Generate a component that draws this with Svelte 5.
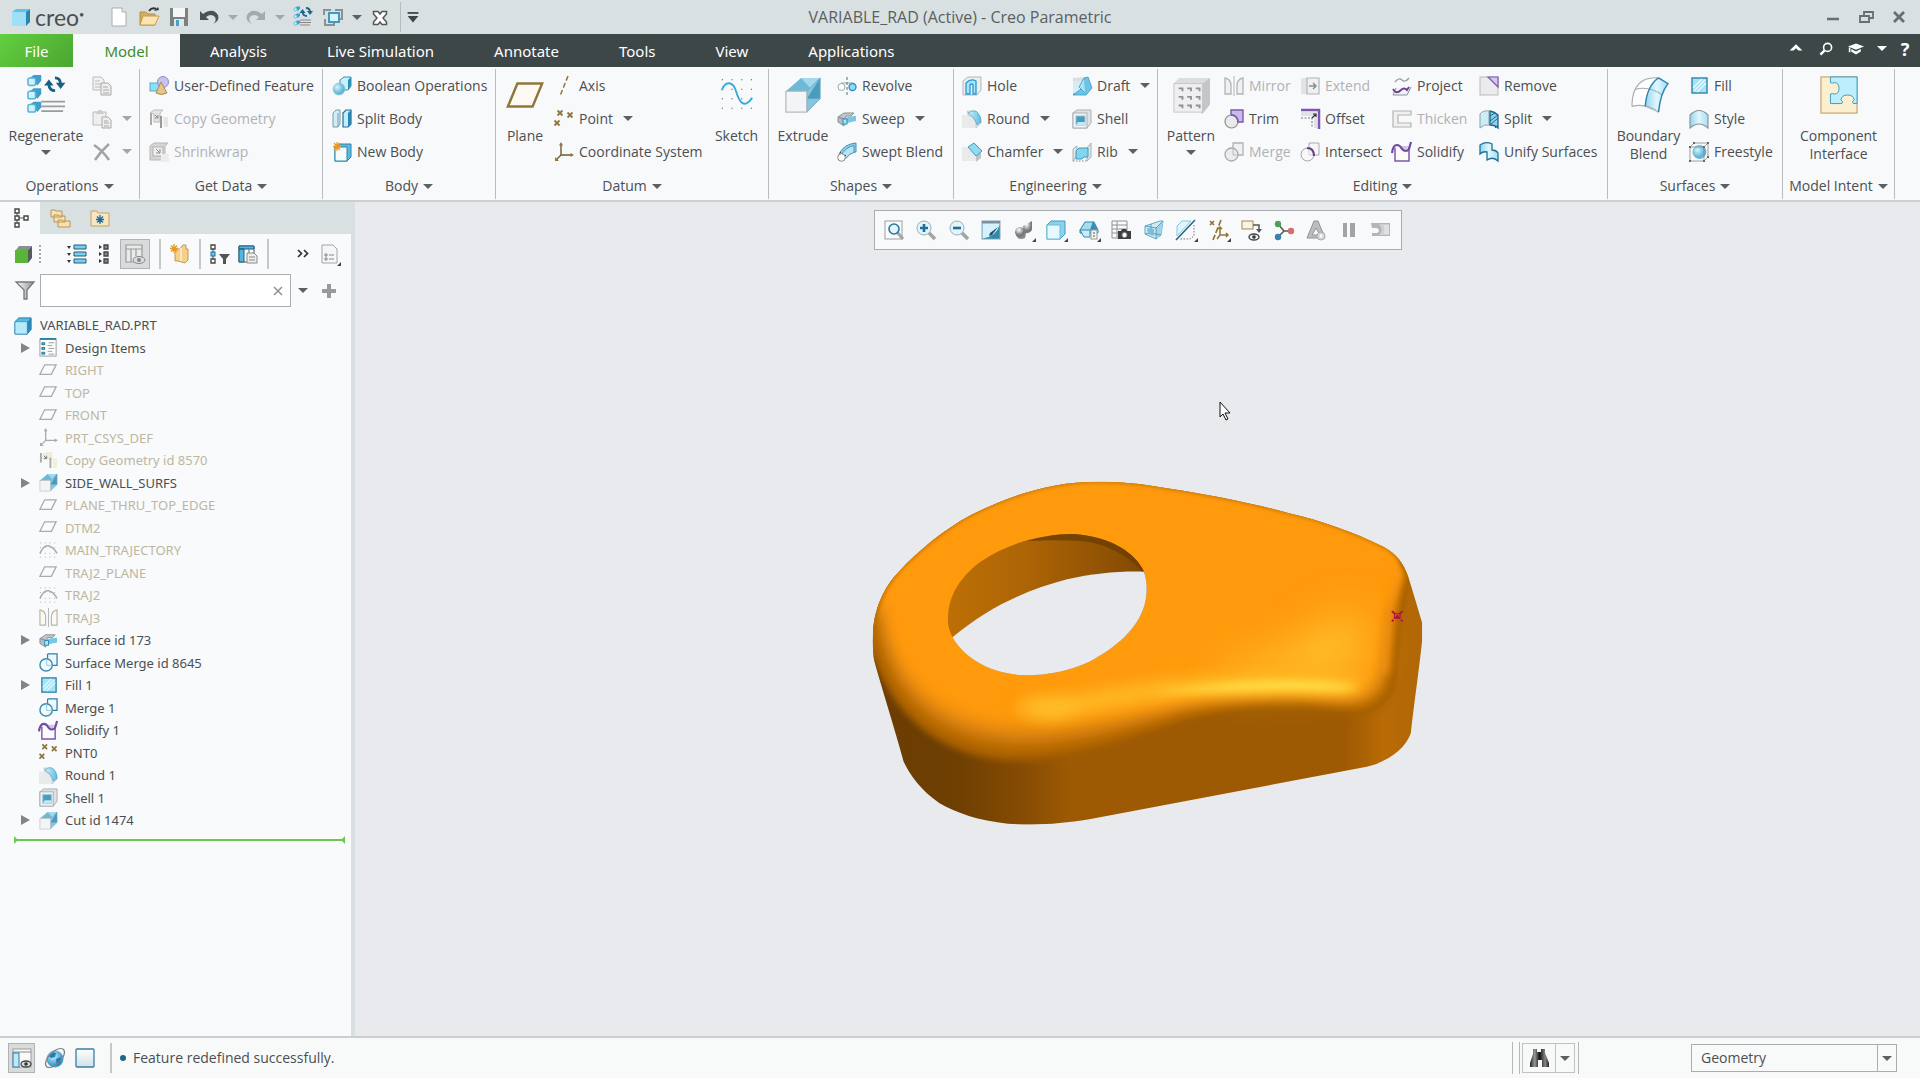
<script>
  const cube = (x, y, s) =>
    `<path d="M${x + 1} ${y + 2}l2-1.500h${s}v${s - 1}l-2 2.500z" fill="#3f9fc8"/><rect x="${x}" y="${y + 2}" width="${s}" height="${s}" rx="1" fill="#cdf3ff" stroke="#58b4d6" stroke-width=".8"/>`;

  const icons = {
    logo: `<path d="M1 5l4-3h14l-4 3z" fill="#5cc3ea"/><path d="M15 5l4-3v13l-4 4z" fill="#2a86b0"/><rect x="1" y="5" width="14" height="14" rx="1" fill="#9fe0f8"/>`,
    newfile: `<path d="M3 1h10l4 4v14H3z" fill="#fff" stroke="#a9adae"/><path d="M13 1v4h4" fill="#eee" stroke="#a9adae"/>`,
    open: `<path d="M1 18V5h6l2 2h7v11z" fill="#d6ab63" stroke="#b98d47"/><path d="M4 9h16l-4 9H1z" fill="#fbe3b2" stroke="#c79b52"/><path d="M10 4q3-4 7-2" fill="none" stroke="#333" stroke-width="2"/><path d="M15 4l5-1-1-3z" fill="#333"/>`,
    save: `<path d="M1 1h18v18H1z" fill="#7c8081"/><rect x="4" y="1" width="12" height="9" fill="#f5f6f6"/><rect x="5" y="12" width="10" height="7" fill="#dfe6e8"/><rect x="7" y="13" width="3" height="6" fill="#4b9fca"/>`,
    undo: `<path d="M1 4v9h9l-3-3q5-4 9 0 2 4-2 7 7-3 5-9-5-8-15-1z" fill="#4c5253"/>`,
    redo: `<path d="M19 4v9h-9l3-3q-5-4-9 0-2 4 2 7-7-3-5-9 5-8 15-1z" fill="#a5abac"/>`,
    regen: cube(1, -1, 3) + cube(1, 6, 3) + cube(1, 13, 3) + `<path d="M7 13h11M7 15.500h11M7 18h10" stroke="#888" stroke-width="1.100"/><path d="M6.500 6h6L9.500 2zM14 4h6l-3 4z" fill="#176a92"/><path d="M9.500 5q.5 4 4.500 4M17 4.500q-.5-3.500-4-3.500" fill="none" stroke="#176a92" stroke-width="2"/>`,
    regenbig: `<g>${cube(.5, -1, 4)}${cube(.5, 6, 4)}${cube(.5, 13, 4)}</g><path d="M7.500 13.500h12.500M7.500 16h12.500M7.500 18.500h11.500" stroke="#9b9c9e" stroke-width="1"/><path d="M9 5h5l-2.500-3.200zM15.200 3.500h5l-2.500 3.300z" fill="#176088"/><path d="M11.500 4.500q.3 3.200 3.300 3.200M17.700 4q-.3-3-3-3" fill="none" stroke="#176088" stroke-width="1.500"/>`,
    windows: `<path d="M1 8V3h7M12 3h7v9h-3M2 12v6h9v-2" fill="none" stroke="#8c9293" stroke-width="2"/><path d="M6 6h10v9H6z" fill="#d8f3fc" stroke="#3d9ac2" stroke-width="2"/>`,
    xout: `<path d="M3.500 4.500h4.500l2 2.500 2-2.500h4.500v2.500L13 11l3.500 4v2.500H12L10 15l-2 2.500H3.500V15L7 11 3.500 7z" fill="#fff" stroke="#555" stroke-width="1.500"/>`,
    custom: `<path d="M4 5.500h12" stroke="#3f4546" stroke-width="2"/><path d="M4 9h12l-6 7z" fill="#3f4546"/>`,
    copy: `<path d="M1 1h8l3 3v10H1z" fill="#f2f2f3" stroke="#bbb"/><path d="M3 5h5M3 8h6M3 11h6" stroke="#bbb"/><path d="M9 7h7l3 3v9H9z" fill="#eee" stroke="#aaa"/><path d="M11 11h5M11 14h6M11 17h6" stroke="#aaa"/>`,
    paste: `<path d="M1 3h13v13H1z" fill="#efeff0" stroke="#bbb"/><path d="M4 5l1-3h1q2-3 4 0l2 3z" fill="#ccc"/><path d="M10 8h6l3 3v8h-9z" fill="#eee" stroke="#aaa"/><path d="M12 12h4M12 14h5M12 17h5" stroke="#aaa"/>`,
    del: `<path d="M2 3q9 6 15 15M17 2Q9 9 3 18" stroke="#a3a3a4" stroke-width="2.500" fill="none"/>`,
    udf: `<rect x="1" y="7" width="10" height="8" fill="#8fdcf6" stroke="#5aa9cb"/><circle cx="14" cy="6" r="5.500" fill="#c5c3ef" stroke="#8e8dc5"/><path d="M12 6L7 17q5 3 11 0z" fill="#e7c68e" stroke="#a98950"/>`,
    copygeo: `<path d="M1 4l4-3h9l-3 3v9H5V5z" fill="#e4e4e5" stroke="#bdbdbe"/><path d="M2 4v12" stroke="#aaa" stroke-width="2"/><path d="M6 6l3 3m0-3v3H6" stroke="#888" fill="none"/><path d="M12 7v12" stroke="#999" stroke-width="2"/><path d="M14 8h5v10h-4z" fill="#e6e6e7"/>`,
    copygeod: `<path d="M4 3l4-2h6v8H5z" fill="#efecda"/><path d="M2 2v10M12 7v11" stroke="#aaa" stroke-width="2"/><path d="M5 5l3 3m0-3v3H5" stroke="#777" fill="none"/><path d="M14 8h5v10h-4z" fill="#f3efd8"/>`,
    shrink: `<path d="M1 4l4-3h14l-3 3v14H1z" fill="#d5d5d6" stroke="#b7b7b8"/><rect x="4" y="5" width="10" height="9" fill="#f0f0f0" stroke="#b0b0b0"/><path d="M7 7l4 4m0-4v4H7" stroke="#888" fill="none"/><path d="M12 12h8v8h-8z" fill="#ededee"/>`,
    boolean: `<path d="M8 4l4-3h7v9l-3 4H8z" fill="#c9f1fd" stroke="#3790b8"/><path d="M16 4v10l3-4V1z" fill="#2f8fb8"/><circle cx="7" cy="13" r="6" fill="url(#gBall)" stroke="#8bbfd2" stroke-width=".6"/>`,
    splitbody: `<path d="M1 4l3-3h4v14l-2 3H1z" fill="#cdeef9" stroke="#7f9aa5"/><path d="M6 4v14" stroke="#7f9aa5"/><path d="M11 4l3-3h5v14l-3 3h-5z" fill="#c3effc" stroke="#1f6f98" stroke-width="1.200"/><path d="M16 4v14l3-3V1z" fill="#2a86b0"/>`,
    newbody: `<path d="M3 5l3-3h13v13l-4 4H3z" fill="#5fb9dc" stroke="#2d82aa"/><rect x="3" y="5" width="12" height="14" fill="#f6fbfd" stroke="#2d82aa"/><path d="M5 0v9M1 4.500h8M2 1l6 7M8 1L2 8" stroke="#e79a2a" stroke-width="1.300"/>`,
    plane: `<path d="M6 4h13l-5 12H1z" fill="#fdfaf3" stroke="#92753b" stroke-width="1.300"/>`,
    planes: `<path d="M6 4h12l-5 10H1z" fill="#fbfbfb" stroke="#a9acae" stroke-width="1.400"/>`,
    axis: `<path d="M14 0L6 20" stroke="#92753b" stroke-width="1.500" stroke-dasharray="5 2.500"/>`,
    point: `<path d="M3.500 1.500l5 5m0-5l-5 5M13.500 3.500l5 5m0-5l-5 5M.5 11.500l5 5m0-5l-5 5" stroke="#92753b" stroke-width="1.800"/>`,
    csys: `<path d="M7 2v11h11M7 13l-5 5" stroke="#6f5a2c" stroke-width="1.400" fill="none"/><path d="M5 3.500L7 0l2 3.500zM16.500 11l3.500 2-3.500 2zM1 15v4h4z" fill="#92753b"/>`,
    csyss: `<path d="M7 2v11h11M7 13l-5 5" stroke="#a9acae" stroke-width="1.400" fill="none"/><path d="M5 3.500L7 0l2 3.500zM16.500 11l3.500 2-3.500 2zM1 15v4h4z" fill="#a9acae"/>`,
    sketch: `<path d="M2 2h17M2 7h17M2 12h17M2 17h17" stroke="#555" stroke-width=".6" stroke-dasharray=".6 4.500"/><path d="M2 7.500C4 2 8 3 9.500 8s4 10 8.500 3.500" fill="none" stroke="#3ba9da" stroke-width="1"/>`,
    extrude: `<path d="M1 8l8-7h10l-7 7z" fill="#6db9d6"/><path d="M9 1h10v11z" fill="#a2d9ee"/><path d="M12 8l7-7v11l-7 7z" fill="#83c6df"/><path d="M19 1v11h-7z" fill="#4a9cbf"/><path d="M12 8l7-7v11l-7 7z" fill="none" stroke="#7ca8b8" stroke-width=".5"/><rect x="1" y="8" width="11" height="11" fill="#f3f4f6" stroke="#aeb5b8" stroke-width=".6"/>`,
    revolve: `<circle cx="4.500" cy="11" r="3.500" fill="#fff" stroke="#9aa"/><circle cx="15.500" cy="11" r="3.500" fill="#8edbf6" stroke="#2f8db8" stroke-width="1.300"/><path d="M4 7h12" stroke="#8aa"/><path d="M10 1v18" stroke="#666" stroke-dasharray="3 2"/>`,
    sweep: `<path d="M1 8l6-4h10l-3 3H9l-1 3z" fill="#c3c7c9" stroke="#8a9094"/><path d="M1 8l6 2v7l-6-4z" fill="#b5bbbe" stroke="#8a9094"/><path d="M7 10q4-3 12-3v5l-9 2-3 3z" fill="#79c7e2"/><rect x="6" y="10" width="4" height="5" fill="#aee4f6" stroke="#2f8db8"/>`,
    swept: `<path d="M2 12Q7 2 19 1v9q-7 0-11 7z" fill="#8fd0e8" stroke="#3b93b9"/><path d="M4 13Q9 5 17 3.500v7q-5 1-8 6" stroke="#4f93b0" fill="#b5e4f4"/><circle cx="4.500" cy="15.500" r="3.800" fill="#fff" stroke="#888"/><path d="M3 11l1-1M8 14l1-1" stroke="#444"/>`,
    hole: `<path d="M1 5l5-4h13v13l-4 5H1z" fill="#eceded" stroke="#b4b7b9"/><path d="M4 18V7q5-5 10-2v13h-3V9q-1-2-3 0v9z" fill="#a8e3f7" stroke="#2a9ad0" stroke-width="1.300"/>`,
    round: `<path d="M0 6h8q6 1 6 13H0z" fill="#e9eaeb"/><path d="M5 2h7q7 3 7 12l-5 5V16q-1-8-8-10z" fill="#dfe3e5" stroke="#b6bfc3" stroke-width=".6"/><path d="M6 4q4-3 8-2 5 4 5 11l-4 3Q13 8 6 4z" fill="url(#gRound)" stroke="#4aa0c4" stroke-width=".7"/>`,
    chamfer: `<path d="M0 5h6l8 8v6H0z" fill="#e9eaeb"/><path d="M14 13l5-3v6l-5 4z" fill="#bcc5c8"/><path d="M6 5l6-4 8 8-6 5z" fill="#93d9f2" stroke="#3f9cc4"/>`,
    draft: `<path d="M1 3h14v15H1z" fill="#d5edf6" /><path d="M1 2l13-1-4 4H1z" fill="#dcdede"/><path d="M1 18h12" stroke="#3d9ac2"/><path d="M12 2l4-1 4 11-6 7H1l8-6z" fill="#6dc3e3" stroke="#3d9ac2" stroke-width=".8"/><path d="M12 2l-5 9 6 6" fill="#a9e2f6" stroke="#3d9ac2" stroke-width=".8"/>`,
    shell: `<path d="M1 4l4-3h14v13l-4 5H1z" fill="#dfe2e3" stroke="#a9b0b3"/><rect x="1" y="4" width="14" height="15" fill="#f1f3f4" stroke="#a9b0b3"/><rect x="4" y="7" width="9" height="9" fill="#4a9cbf" stroke="#8fc5da"/><path d="M4 16l2-3h7v3z" fill="#bfeaf8"/>`,
    rib: `<path d="M1 7l4-3v10l-4 5zM15 6l4-5v14l-4 4z" fill="#e2e5e6" stroke="#aab0b3"/><path d="M4 9l3-3h9v9h-4l-2 2H4z" fill="#86d3ee" stroke="#3d9ac2"/><path d="M1 19h14" stroke="#888" stroke-dasharray="1.500 1.500"/>`,
    pattern: `<path d="M1 4l3-3h16v14l-4 5z" fill="#c5c6c8"/><path d="M1 4l3-3h16l-4 3z" fill="#dcdddf"/><rect x="1" y="4" width="15" height="15" fill="#efeff1" stroke="#c6c7c9" stroke-width=".5"/>` +
      [6, 10.5, 15].map((y) => [3.5, 8, 12.5].map((x) => `<path d="M${x} ${y}h2.500v2h-1v-1h-1.500z" fill="#8f9193"/>`).join('')).join(''),
    mirror: `<path d="M1 2q6 1 6 8v8H1zM19 2q-6 1-6 8v8h6z" fill="#f1f1f2" stroke="#b3b4b6" stroke-width="1.300"/><path d="M10 0v20" stroke="#b3b4b6"/>`,
    mirrord: `<path d="M1 2q6 1 6 8v8H1zM19 2q-6 1-6 8v8h6z" fill="#fbfaf0" stroke="#b7b5a6" stroke-width="1.200"/><path d="M10 0v20" stroke="#b3b4b6"/>`,
    trim: `<path d="M7 1h12v12h-5Q13 6 7 6z" fill="#c9b9ec" stroke="#7c58ac" stroke-width="1.400"/><circle cx="7.500" cy="12.500" r="6.500" fill="#dfe0e2" fill-opacity=".6" stroke="#8e8f92" stroke-width="1.200"/><path d="M7 6q7 0 7 8" fill="none" stroke="#7c58ac" stroke-width="1.400"/>`,
    mergeg: `<path d="M9 1h10v12H9z" fill="#f1f1f2" stroke="#b0b1b3" stroke-width="1.300"/><circle cx="7.500" cy="12.500" r="6.500" fill="#ececed" stroke="#a7a8aa" stroke-width="1.300"/><path d="M9 6v7h5" stroke="#b9babc" fill="none"/>`,
    mergeb: `<path d="M9 1h10v12h-5M9 6V1" fill="#edf8fc" stroke="#2f7fa6" stroke-width="1.300"/><circle cx="7.500" cy="12.500" r="6.500" fill="#f3fafd" stroke="#3a8bb1" stroke-width="1.500"/><path d="M8 6v7h6" stroke="#8ccbe2" fill="none"/>`,
    extend: `<path d="M1 2h11v16H1z" fill="#e2e3e4"/><path d="M7 2h12v16H7z" fill="#f0f0f1" stroke="#b3b4b6" stroke-width="1.200"/><path d="M9 10h6M13 7l3 3-3 3" stroke="#8c8d8f" stroke-width="1.500" fill="none"/>`,
    offset: `<path d="M1 1h18v19" fill="none" stroke="#7c58ac" stroke-width="2.500"/><path d="M1 3h16v16h-3V7H1z" fill="#e3e0ee"/><path d="M1 9h11v10" fill="none" stroke="#777" stroke-dasharray="2 1.500"/><path d="M12 9l4-4m-3 0h3v3" stroke="#333" fill="none" stroke-width="1.200"/>`,
    intersect: `<path d="M9 1h10v12H9z" fill="#f6f6f8" stroke="#a9aaac"/><circle cx="7.500" cy="12.500" r="6.500" fill="#f6f6f8" fill-opacity=".6" stroke="#a7a8aa"/><path d="M7 6q7 0 7 8" fill="none" stroke="#6b3f94" stroke-width="2.200"/>`,
    project: `<path d="M3 6q4-5 7-2t7-2" fill="none" stroke="#9a9b9d" stroke-width="1.300"/><path d="M4 12L1 19h14l4-8" fill="#f3f2f8" stroke="#8e8f92"/><path d="M1 13q3 6 8 1 3-3 6 0l2-3" fill="none" stroke="#6b3f94" stroke-width="1.800"/>`,
    thicken: `<path d="M1 2h18v4H6v8h13v4H1z" fill="#f0f0f1" stroke="#b3b4b6" stroke-width="1.200"/>`,
    solidify: `<path d="M3 6v13h14V5" fill="#fcfcfe" stroke="#7c58ac" stroke-width="1.500"/><path d="M7 4h10l-3 4q-3 2-7-4z" fill="#cfc6e6"/><path d="M0 11Q1 3 5 3q3 0 5 4 4 4 7 0l2-7" fill="none" stroke="#7449a3" stroke-width="2.200"/>`,
    remove: `<rect x="1" y="1" width="18" height="18" fill="#ebebed" stroke="#bbb"/><path d="M9 1h10v10z" fill="#d5c6ef" stroke="#7c58ac" stroke-width="1.200"/>`,
    split: `<path d="M1 5q3-4 9-3v14q-5-1-9 3z" fill="#ccecf6" stroke="#8aa4ae"/><path d="M11 2q5 1 8 4v13q-3-3-8-3z" fill="#8dd2ea" stroke="#1c6690" stroke-width="1.300"/><path d="M11 7l5-3m-5 8l8-6m-8 10l8-7m-3 10l3-3" stroke="#1c6690"/>`,
    unify: `<path d="M1 3q6-4 12-1v6q4 0 6 3v8q-5-5-11-1v-8q-4-1-7 2z" fill="url(#gSurf)" stroke="#1f7099" stroke-width="1.300"/>`,
    boundary: `<path d="M3 9Q7 0 16 1l4 2q-5 5-5 16-7-6-14-3 0-4 2-7z" fill="#fff"/><path d="M11 6q2-4 5-5l4 3q-4 4-5 16l-7-4q1-5 3-10z" fill="url(#gSurf)"/><path d="M1 16Q1 0 15 1M1 16q7-2 14 3M3 7q7-2 14 3" fill="none" stroke="#a6abb0" stroke-width=".6"/><path d="M15 1q-6 4-7 15M15 1l5 3q-4 5-5 15" fill="none" stroke="#2f86b2" stroke-width=".8"/>`,
    fill: `<rect x="3" y="2" width="15" height="15" fill="#a6e3f8" stroke="#2c83ac" stroke-width="1.400"/><path d="M4 12l9-9M5 15L16 4M8 16l9-9" stroke="#e9fbff" stroke-width="1.200"/>`,
    style: `<path d="M1 6q9-9 18 0v13q-9-8-18 0z" fill="url(#gSurf)" stroke="#8a9296" stroke-width="1.100"/>`,
    freestyle: `<circle cx="10.500" cy="10" r="6.500" fill="url(#gBall)" stroke="#5aa9c8" stroke-width=".8"/><path d="M1 5h14v14H1zM1 5l4-4h14v14l-4 4M15 5l4-4" fill="none" stroke="#888" stroke-width=".8"/><path d="M0 4h2v2H0zM14 4h2v2h-2zM0 18h2v2H0zM14 18h2v2h-2zM18 0h2v2h-2zM18 14h2v2h-2zM4 0h2v2H4z" fill="#666"/>`,
    component: `<rect x=".5" y=".5" width="19" height="19" fill="#fdf0d0" stroke="#b39154" stroke-width=".5"/><path d="M5.500.5h14v14h-2q-1-1 .5-2-.5-2.500-3.500-2.500t-3.500 2.500q1.500 1 .5 2h-6v-5q1-.5 2 0 2.500 0 2.500-3T7.500 3.500q-1 .5-2 0z" fill="#bdeefd" stroke="#3b99c2" stroke-width=".5"/>`,
    // model tree panel
    treetab: `<path d="M7 3v14M7 10h8" stroke="#555"/><path d="M5 1h4v4H5zM5 8h4v4H5zM5 15h4v4H5zM14 8h4v4h-4z" fill="#fff" stroke="#444" stroke-width="1.400"/>`,
    folders: `<path d="M1 2h4l1 1h6v6H1zM4 7h4l1 1h6v6H4zM8 12h4l1 1h7v6H8z" fill="#f8dfab" stroke="#b8965b"/>`,
    favs: `<path d="M1 3h6l1 2h11v13H1z" fill="#f8e6c0" stroke="#c2a266"/><path d="M10 7v9M6 11.500h8M7 8.500l6 6M13 8.500l-6 6" stroke="#1d6f9b" stroke-width="1.300"/>`,
    green: `<path d="M3 6l3-4h13l-4 4z" fill="#8b8f90"/><path d="M15 6l4-4v12l-4 5z" fill="#555b5c"/><rect x="2" y="6" width="13" height="13" fill="#59b53a"/>`,
    expand: `<path d="M7 1h12v4H7zM7 8h12v4H7zM7 15h12v4H7z" fill="#7bd0ee" stroke="#235d7c"/><path d="M0 2h4l-2 3zM0 9h4l-2 3zM0 16h4l-2 3z" fill="#333"/>`,
    collapse: `<path d="M10 1h4v4h-4zM10 8h4v4h-4zM10 15h4v4h-4z" fill="#888" stroke="#444" stroke-width="1.300"/><path d="M5 1v4l3-2zM5 8v4l3-2zM5 15v4l3-2z" fill="#333"/>`,
    cols: `<path d="M1 1h16v17H1zM1 5h16M6 5v13M11 5v7" fill="#e9eaea" stroke="#999" stroke-width="1.200"/><ellipse cx="14" cy="16" rx="6" ry="3.500" fill="#ddd" stroke="#888"/><circle cx="14" cy="16" r="2" fill="#888"/>`,
    folderstar: `<path d="M5 5h6V3l2-2h3v4h2v11l-3 3-7-2H5z" fill="#f4d08b" stroke="#c29a51"/><path d="M11 4v13" stroke="#fbe8bf" stroke-width="2"/><path d="M4 0v9M0 4.500h8M1 1.500l6 6M7 1.500l-6 6" stroke="#e79a2a" stroke-width="1.300"/>`,
    treefilter: `<path d="M3 2v16" stroke="#444"/><path d="M1 1h4v4H1zM1 15h4v4H1z" fill="#fff" stroke="#444" stroke-width="1.300"/><rect x="1" y="8" width="4" height="4" fill="#6cc6ea" stroke="#1d6f9b"/><path d="M9 10h11l-4 5v5h-3v-5z" fill="#555"/>`,
    coltable: `<path d="M1 2h15v16H1z" fill="#fff" stroke="#555"/><path d="M1 2h15v3H1zM1 5h5v13H1z" fill="#57b4dc" stroke="#1d5f85"/><path d="M11 5v6" stroke="#666"/><path d="M9 9h7l3 3v7H9z" fill="#eee" stroke="#888"/><path d="M11 13h6M11 16h6" stroke="#888"/>`,
    more: `<path d="M5 6l3.500 3.500L5 13M11 6l3.500 3.500L11 13" fill="none" stroke="#333" stroke-width="1.700"/>`,
    page: `<path d="M1 1h11l4 4v14H1z" fill="#f5f6f6" stroke="#a3a7a8"/><path d="M4 10h2v2H4zM4 14h2v2H4zM8 11h5M8 15h5" fill="none" stroke="#888"/><path d="M20 18v4h-4z" fill="#444"/>`,
    funnel: `<path d="M1 1h18l-7 8v9H9V9z" fill="url(#gFunnel)" stroke="#777" stroke-width="1.300"/>`,
    part: `<path d="M1 6l4-4h13v12l-4 5H1z" fill="#5ab9e2" stroke="#25779f"/><path d="M1 7q0-1 1-1h12v13H2q-1 0-1-1z" fill="#b5eafb" stroke="#3791bb" stroke-width=".8"/><path d="M14 6l4-4v12l-4 5z" fill="#2b88b4"/>`,
    design: `<rect x="1" y="1" width="17" height="18" fill="#fff" stroke="#999"/><path d="M1 1h17" stroke="#2d7fa6" stroke-width="2"/><path d="M3 5h3v2H3zM3 10h3v2H3zM3 15h3v2H3z" fill="#6cc6ea" stroke="#1d6f9b"/><path d="M10 5h6M9 8h5M10 11h6M9 14h5M10 17h6" stroke="#999"/>`,
    traj: `<path d="M1 2h18M1 7h18M1 17h18M1 13h18" stroke="#aaa" stroke-dasharray="1 4"/><path d="M1 13q4-9 9-8t9 8" fill="none" stroke="#a9acae" stroke-width="1.600"/>`,
    // graphics toolbar
    refit: `<rect x="1" y="1" width="17" height="18" fill="#fbfbfb" stroke="#9b9fa0"/><path d="M13 12l6 7" stroke="#a4a4a4" stroke-width="3"/><circle cx="10" cy="9" r="5" fill="#e3f4fa" stroke="#25779f" stroke-width="1.600"/>`,
    zoomin: `<path d="M12 12l7 7" stroke="#a4a4a4" stroke-width="3.500"/><circle cx="8" cy="8" r="7" fill="#e6f4f9" stroke="#8fb3c1"/><path d="M8 4v8M4 8h8" stroke="#1d6f9b" stroke-width="2.600"/>`,
    zoomout: `<path d="M12 12l7 7" stroke="#a4a4a4" stroke-width="3.500"/><circle cx="8" cy="8" r="7" fill="#e6f4f9" stroke="#8fb3c1"/><path d="M4 8h8" stroke="#1d6f9b" stroke-width="2.600"/>`,
    repaint: `<rect x="1" y="1" width="18" height="18" fill="#2f8ab2" stroke="#8fa3ab"/><path d="M1.500 2h17v3Q15 17 1.500 18.500z" fill="#d5f1f9"/><path d="M1 1h18v2.500H1z" fill="#7b929c"/><path d="M17 7l-6 8-3 1 1-3z" fill="#1c5270"/>`,
    shading: `<path d="M4 8l9 1-2 9q-7 3-9-3z" fill="#878a8c"/><circle cx="6" cy="12" r="5" fill="url(#gGrey)"/><path d="M9 6l9-5v9q-3 5-8 2z" fill="url(#gGrey)"/><path d="M22 18v4h-4z" fill="#444"/>`,
    display: `<path d="M1 5l4-4h14v13l-5 5H1z" fill="#8ad3ee" stroke="#3d9ac2"/><rect x="1" y="5" width="13" height="14" fill="#e6f9ff" stroke="#6fbad6"/><path d="M22 18v4h-4z" fill="#444"/>`,
    saved: `<path d="M1 10l5-8h9l4 8v3H1z" fill="#a4ddf1" stroke="#3188b1"/><path d="M11 10l3-9 5 9z" fill="#3a8cb3"/><path d="M1 10h10v7H5z" fill="#c7effb" stroke="#3188b1"/><rect x="12" y="10" width="6" height="9" fill="#f4f4f4" stroke="#999"/><path d="M14 13h2M14 16h2" stroke="#555"/><path d="M22 18v4h-4z" fill="#444"/>`,
    viewmgr: `<path d="M1 1h15v17H1zM1 5h15M1 9h15M1 13h9M6 1v17" fill="#fafafa" stroke="#8f9394"/><path d="M7 11h3l1-2h4l1 2h4v8H7z" fill="#3b3f40"/><circle cx="13.500" cy="15" r="2.500" fill="#fff" stroke="#888"/>`,
    persp: `<path d="M1 6l15-5h3l-2 14-5 4-11-5z" fill="#cdeaf5" stroke="#6aa9c2"/><path d="M12 8l7-7-2 14-5 4z" fill="#9fd5ea"/><path d="M1 6l11 2 7-7M12 8v11M7 4v9l10 2M7 13l-6 1" fill="none" stroke="#4d97b8" stroke-width=".9"/><path d="M3 8l7 1v7l-6-2z" fill="#7fbdd6"/>`,
    section: `<path d="M1 6l5-5h9L1 16z" fill="#e0f6fd" stroke="#8bc8de"/><path d="M18 5v11l-4 3H4" fill="none" stroke="#777" stroke-dasharray="1.500 1.500"/><path d="M0 20L19 0" stroke="#25668a" stroke-width="1.600"/><path d="M22 18v4h-4z" fill="#444"/>`,
    datums: `<path d="M1 1l4 4m0-4L1 5M12 0L4 20" stroke="#92753b" stroke-width="1.700" stroke-dasharray="6 2"/><path d="M11 8v7h8M11 15l-3 4M9 9l2-2 2 2M17 13l2 2-2 2" fill="none" stroke="#92753b" stroke-width="1.500"/><path d="M22 18v4h-4z" fill="#444"/>`,
    annot: `<rect x="1" y="1" width="11" height="8" fill="#fbf3dd" stroke="#9b8a62"/><path d="M12 5h6v6" fill="none" stroke="#555" stroke-width="1.500"/><path d="M15 9h6l-3 4z" fill="#555"/><ellipse cx="13" cy="17" rx="5" ry="3" fill="#eee" stroke="#444" stroke-width="1.400"/><circle cx="13" cy="17" r="1.800" fill="#333"/>`,
    spin: `<path d="M4 4l6 7-6 6M10 11h7" stroke="#555" stroke-width="1.500" fill="none"/><circle cx="4" cy="4" r="3.200" fill="#4da05a"/><circle cx="17" cy="11" r="3.200" fill="#d96b6b"/><circle cx="4" cy="17" r="3.200" fill="#3484b0"/>`,
    simul: `<path d="M8 1h4l7 17H1zM10 8l-4 7h8z" fill="#bcbdbf" stroke="#929395" fill-rule="evenodd"/><circle cx="15" cy="16" r="4" fill="#d7d7d8" stroke="#aaa"/><path d="M14 14v4l3-2z" fill="#fff"/>`,
    pause: `<path d="M4 3h4v14H4zM11 3h5v14h-5z" fill="#a2a3a5"/>`,
    record: `<path d="M0 3h19v13H1v-3h5q4-2 0-5H1z" fill="#b4b5b7"/><path d="M8 4h10v11H8q5-5 0-11z" fill="#cfd0d2"/><path d="M12 5h6v9h-6q3-4 0-9z" fill="#e0e1e3"/>`,
    // status bar
    panel: `<rect x="1" y="1" width="18" height="18" fill="#fafafa" stroke="#999"/><path d="M1 4h18" stroke="#888"/><rect x="1" y="5" width="6" height="14" fill="#bfe8f6" stroke="#2d7fa6"/><ellipse cx="14" cy="16" rx="5" ry="3" fill="#ddd" stroke="#444" stroke-width="1.300"/><circle cx="14" cy="16" r="1.800" fill="#333"/>`,
    globe: `<circle cx="10" cy="11" r="8.500" fill="url(#gGlobe)"/><path d="M4 8q3-5 7-3l-1 4-4 1zM11 11l5-2v6l-4 3z" fill="#1f7fb2"/><ellipse cx="10" cy="10" rx="12" ry="6" transform="rotate(-45 10 10)" fill="none" stroke="#7c8182" stroke-width="1.200"/>`,
    square: `<rect x="1" y="1" width="18" height="18" rx="1" fill="url(#gSq)" stroke="#3a7ea0" stroke-width="1.300"/>`,
    binoc: `<path d="M4 1h4v3h4V1h4v4l4 10v4h-7v-7h-4v7H1v-4l3-9z" fill="url(#gBin)"/>`,
    search: `<circle cx="12" cy="8" r="5" fill="none" stroke="#fff" stroke-width="2"/><path d="M8 12l-5 5" stroke="#fff" stroke-width="3"/>`,
    hat: `<path d="M10 3l10 4-10 4L0 7z" fill="#fff"/><path d="M4 10l6 3 6-3v3l-6 4-6-4zM1 8h2v6H1z" fill="#fff"/>`,
    up: `<path d="M2 12l8-8 8 8h-5l-3-3-3 3z" fill="#fff"/>`,
    min: `<path d="M4 12h12" stroke="#686e70" stroke-width="2.500"/>`,
    restore: `<path d="M4 9h9v6H4zM8 9V5h9v6h-4" fill="none" stroke="#686e70" stroke-width="1.800"/>`,
    close: `<path d="M5 5l10 10M15 5L5 15" stroke="#686e70" stroke-width="2.800"/>`
  };

  const quick = [
    ['newfile', 'New'], ['open', 'Open'], ['save', 'Save'], ['undo', 'Undo'], [null, 'Undo list', 1],
    ['redo', 'Redo'], [null, 'Redo list', 1], ['regen', 'Regenerate model'], ['windows', 'Windows'],
    [null, 'Window list'], ['xout', 'Close window']
  ];
  const tabs = ['Analysis', 'Live Simulation', 'Annotate', 'Tools', 'View', 'Applications'];

  // item: [icon, label, has menu, disabled]
  const groups = [
    { id: 'ops', label: 'Operations', cols: [
      { icon: 'regenbig', text: 'Regenerate', menu: true },
      [['copy', '', 0, 1], ['paste', '', 1, 1], ['del', '', 1, 1]]] },
    { id: 'data', label: 'Get Data', cols: [
      [['udf', 'User-Defined Feature'], ['copygeo', 'Copy Geometry', 0, 1], ['shrink', 'Shrinkwrap', 0, 1]]] },
    { id: 'body', label: 'Body', cols: [
      [['boolean', 'Boolean Operations'], ['splitbody', 'Split Body'], ['newbody', 'New Body']]] },
    { id: 'datum', label: 'Datum', cols: [
      { icon: 'plane', text: 'Plane' },
      [['axis', 'Axis'], ['point', 'Point', 1], ['csys', 'Coordinate System']],
      { icon: 'sketch', text: 'Sketch' }] },
    { id: 'shapes', label: 'Shapes', cols: [
      { icon: 'extrude', text: 'Extrude' },
      [['revolve', 'Revolve'], ['sweep', 'Sweep', 1], ['swept', 'Swept Blend']]] },
    { id: 'eng', label: 'Engineering', cols: [
      [['hole', 'Hole'], ['round', 'Round', 1], ['chamfer', 'Chamfer', 1]],
      [['draft', 'Draft', 1], ['shell', 'Shell'], ['rib', 'Rib', 1]]] },
    { id: 'edit', label: 'Editing', cols: [
      { icon: 'pattern', text: 'Pattern', menu: true },
      [['mirror', 'Mirror', 0, 1], ['trim', 'Trim'], ['mergeg', 'Merge', 0, 1]],
      [['extend', 'Extend', 0, 1], ['offset', 'Offset'], ['intersect', 'Intersect']],
      [['project', 'Project'], ['thicken', 'Thicken', 0, 1], ['solidify', 'Solidify']],
      [['remove', 'Remove'], ['split', 'Split', 1], ['unify', 'Unify Surfaces']]] },
    { id: 'surf', label: 'Surfaces', cols: [
      { icon: 'boundary', text: 'Boundary Blend' },
      [['fill', 'Fill'], ['style', 'Style'], ['freestyle', 'Freestyle']]] },
    { id: 'intent', label: 'Model Intent', cols: [{ icon: 'component', text: 'Component Interface' }] }
  ];

  // node: [icon, label, expandable, hidden feature]
  const tree = [
    ['design', 'Design Items', 1], ['planes', 'RIGHT', 0, 1], ['planes', 'TOP', 0, 1], ['planes', 'FRONT', 0, 1],
    ['csyss', 'PRT_CSYS_DEF', 0, 1], ['copygeod', 'Copy Geometry id 8570', 0, 1], ['extrude', 'SIDE_WALL_SURFS', 1],
    ['planes', 'PLANE_THRU_TOP_EDGE', 0, 1], ['planes', 'DTM2', 0, 1], ['traj', 'MAIN_TRAJECTORY', 0, 1],
    ['planes', 'TRAJ2_PLANE', 0, 1], ['traj', 'TRAJ2', 0, 1], ['mirrord', 'TRAJ3', 0, 1], ['sweep', 'Surface id 173', 1],
    ['mergeb', 'Surface Merge id 8645'], ['fill', 'Fill 1', 1], ['mergeb', 'Merge 1'], ['solidify', 'Solidify 1'],
    ['point', 'PNT0'], ['round', 'Round 1'], ['shell', 'Shell 1'], ['extrude', 'Cut id 1474', 1]
  ];
  const viewTools = [
    ['refit', 'Refit'], ['zoomin', 'Zoom In'], ['zoomout', 'Zoom Out'], ['repaint', 'Repaint'], ['shading', 'Rendering'],
    ['display', 'Display Style'], ['saved', 'Saved Orientations'], ['viewmgr', 'View Manager'], ['persp', 'Perspective'],
    ['section', 'Section'], ['datums', 'Datum Display'], ['annot', 'Annotation Display'], ['spin', 'Spin Center'],
    ['simul', 'Simulation'], ['pause', 'Pause'], ['record', 'Record']
  ];

  // The rounded edge is a stack of faces blended from the wall line to the top line.
  const wallLine = [20, 560, 60, 730, 180, 905, 420, 915, 560, 918, 700, 864, 860, 800, 1000, 754, 1100, 748, 1180, 750,
    1260, 754, 1320, 776, 1380, 762, 1440, 740, 1456, 690, 1456, 610, 1466, 480, 1488, 350];
  const topLine = [95, 420, 110, 620, 230, 735, 420, 750, 560, 756, 700, 728, 860, 700, 1000, 682, 1100, 680, 1180, 682,
    1250, 682, 1310, 694, 1335, 672, 1370, 655, 1380, 620, 1385, 560, 1400, 450, 1450, 345];
  const ramp = [[158, 90, 3], [166, 95, 4], [178, 102, 5], [192, 112, 6], [208, 123, 8], [224, 134, 9], [238, 143, 11], [248, 149, 12], [254, 153, 13], [255, 154, 13]];
  const steps = 24;
  const bands = Array.from({ length: steps + 1 }, (_, i) => {
    const t = i / steps;
    const p = wallLine.map((v, k) => Math.round(v + (topLine[k] - v) * t));
    const at = t * (ramp.length - 1);
    const lo = Math.floor(at);
    const hi = Math.min(lo + 1, ramp.length - 1);
    const c = ramp[lo].map((v, k) => Math.round(v + (ramp[hi][k] - v) * (at - lo)));
    return {
      d: `M${p.slice(0, 2)}C${p.slice(2, 8)}C${p.slice(8, 14)}C${p.slice(14, 20)}C${p.slice(20, 26)}C${p.slice(26, 32)}L${p.slice(32, 34)}L${p.slice(34, 36)}L1440 200L700 0L-60 0L-60 300Z`,
      fill: `rgb(${c})`,
      alpha: i < 4 ? (i + 1) / 5 : 1
    };
  });
  let filter = $state('');
</script>

{#snippet icon(name)}
  <svg class="icon" viewBox="0 0 20 20" aria-hidden="true">{@html icons[name]}</svg>
{/snippet}
{#snippet arrow()}<span class="arrow"></span>{/snippet}

<svg class="defs" aria-hidden="true">
  <defs>
    <radialGradient id="gBall" cx=".35" cy=".35"><stop offset="0" stop-color="#d6f4fd" /><stop offset="1" stop-color="#63b8d8" /></radialGradient>
    <radialGradient id="gGlobe" cx=".4" cy=".35"><stop offset="0" stop-color="#c9edfa" /><stop offset="1" stop-color="#3f9fd0" /></radialGradient>
    <linearGradient id="gRound"><stop offset="0" stop-color="#d9f5fd" /><stop offset="1" stop-color="#5bbbe0" /></linearGradient>
    <linearGradient id="gFunnel"><stop offset="0" stop-color="#fff" /><stop offset="1" stop-color="#8c9091" /></linearGradient>
    <linearGradient id="gSurf"><stop offset="0" stop-color="#8ed5ef" /><stop offset=".5" stop-color="#e1f7fd" /><stop offset="1" stop-color="#a2dff4" /></linearGradient>
    <radialGradient id="gGrey" cx=".4" cy=".3"><stop offset="0" stop-color="#fff" /><stop offset="1" stop-color="#77797b" /></radialGradient>
    <linearGradient id="gSq" x2="0" y2="1"><stop offset="0" stop-color="#fff" /><stop offset="1" stop-color="#cfe0e8" /></linearGradient>
    <linearGradient id="gBin"><stop offset="0" stop-color="#222" /><stop offset=".25" stop-color="#999" /><stop offset=".5" stop-color="#111" /><stop offset=".8" stop-color="#888" /><stop offset="1" stop-color="#222" /></linearGradient>
  </defs>
</svg>

<div class="app">
  <header class="title">
    <div class="quick">
      <span class="brand">{@render icon('logo')}<b>creo<sup>•</sup></b></span>
      {#each quick as [name, label, dim]}
        {#if name}
          <button class="tool" aria-label={label}>{@render icon(name)}</button>
        {:else}
          <button class="drop" class:dim aria-label={label}>{@render arrow()}</button>
        {/if}
      {/each}
      <span class="custom"><button class="tool" aria-label="Customize toolbar">{@render icon('custom')}</button></span>
    </div>
    <h1>VARIABLE_RAD (Active) - Creo Parametric</h1>
    <div class="window">
      <button class="tool" aria-label="Minimize">{@render icon('min')}</button>
      <button class="tool" aria-label="Restore">{@render icon('restore')}</button>
      <button class="tool" aria-label="Close">{@render icon('close')}</button>
    </div>
  </header>

  <nav class="tabs">
    <button class="file">File</button>
    <button class="current">Model</button>
    {#each tabs as tab}<button class="tab">{tab}</button>{/each}
    <div class="help">
      <button class="mini" aria-label="Minimize ribbon">{@render icon('up')}</button>
      <button class="mini" aria-label="Search">{@render icon('search')}</button>
      <button class="mini" aria-label="Learning">{@render icon('hat')}</button>
      <button class="drop" aria-label="Learning menu">{@render arrow()}</button>
      <button class="question" aria-label="Help">?</button>
    </div>
  </nav>

  <section class="ribbon" aria-label="Ribbon">
    {#each groups as g}
      <div class="group">
        <div class="cols {g.id}">
          {#each g.cols as col}
            {#if Array.isArray(col)}
              <div class="stack">
                {#each col as [name, text, menu, off]}
                  <button class="cmd" class:off aria-label={text || name}>
                    {@render icon(name)}{#if text}<span>{text}</span>{/if}{#if menu}{@render arrow()}{/if}
                  </button>
                {/each}
              </div>
            {:else}
              <button class="big">
                {@render icon(col.icon)}<span class="name">{col.text}</span>{#if col.menu}{@render arrow()}{/if}
              </button>
            {/if}
          {/each}
        </div>
        <button class="caption">{g.label}{@render arrow()}</button>
      </div>
    {/each}
  </section>

  <main>
    <aside>
      <div class="navtabs">
        <button class="navtab on" aria-label="Model Tree">{@render icon('treetab')}</button>
        <button class="navtab" aria-label="Folder Browser">{@render icon('folders')}</button>
        <button class="navtab" aria-label="Favorites">{@render icon('favs')}</button>
      </div>
      <div class="treebar">
        <button class="tool small" aria-label="Model">{@render icon('green')}</button>
        <span class="grip"></span>
        <button class="tool list" aria-label="Expand all">{@render icon('expand')}</button>
        <button class="tool small" aria-label="Collapse all">{@render icon('collapse')}</button>
        <button class="tool pressed" aria-label="Show columns">{@render icon('cols')}</button>
        <span class="rule"></span>
        <button class="tool" aria-label="New group">{@render icon('folderstar')}</button>
        <span class="rule"></span>
        <button class="tool" aria-label="Tree filters">{@render icon('treefilter')}</button>
        <button class="tool" aria-label="Tree columns">{@render icon('coltable')}</button>
        <span class="rule"></span>
        <button class="tool end" aria-label="More">{@render icon('more')}</button>
        <button class="tool" aria-label="Settings">{@render icon('page')}</button>
      </div>
      <div class="filter">
        {@render icon('funnel')}
        <div class="field">
          <input aria-label="Filter tree" bind:value={filter} />
          <button class="clear" aria-label="Clear" onclick={() => (filter = '')}>
            <svg viewBox="0 0 10 10"><path d="M1 1l8 8M9 1L1 9" stroke="#8d9294" stroke-width="1.500" /></svg>
          </button>
        </div>
        <button class="drop" aria-label="Filter options">{@render arrow()}</button>
        <button class="plus" aria-label="Add"><svg viewBox="0 0 14 14"><path d="M7 0v14M0 7h14" stroke="#979b9c" stroke-width="4" /></svg></button>
      </div>
      <ul class="tree">
        <li class="root">{@render icon('part')}<span>VARIABLE_RAD.PRT</span></li>
        {#each tree as [name, text, open, hidden]}
          <li class:hidden>
            <span class="twist">{#if open}<i></i>{/if}</span>{@render icon(name)}<span>{text}</span>
          </li>
        {/each}
      </ul>
      <div class="insert"></div>
    </aside>

    <div class="canvas">
      <div class="viewbar" role="toolbar" aria-label="Graphics toolbar">
        {#each viewTools as [name, label]}
          <button class="tool" aria-label={label}>{@render icon(name)}</button>
        {/each}
      </div>

      <svg class="model" viewBox="0 0 1568 1140" preserveAspectRatio="none" role="img" aria-label="Shaded part">
        <defs>
          <clipPath id="sil"><path d="M35 530C35 450 65 380 105 335C160 270 225 210 300 165C410 104 520 65 640 65C700 65 760 70 830 85C960 107 1080 135 1160 160C1250 183 1330 215 1415 260C1450 280 1470 310 1482 350C1495 395 1507 440 1520 490V540C1510 640 1497 740 1489 820C1475 865 1430 905 1370 920L620 1078C540 1092 480 1097 400 1091C320 1083 260 1058 215 1030C165 990 137 950 118 905C95 810 60 690 38 600C35 575 34 550 35 530Z" /></clipPath>
          <linearGradient id="wall" gradientUnits="userSpaceOnUse" x1="35" x2="1520" y1="0" y2="0">
            <stop offset="0" stop-color="#6b3d02" /><stop offset=".15" stop-color="#6e3f02" /><stop offset=".27" stop-color="#854b03" />
            <stop offset=".36" stop-color="#9e5a03" /><stop offset=".86" stop-color="#9e5a03" /><stop offset=".93" stop-color="#b96b05" /><stop offset="1" stop-color="#b06706" />
          </linearGradient>
          <linearGradient id="bore" gradientUnits="userSpaceOnUse" x1="240" x2="770" y1="0" y2="0">
            <stop offset="0" stop-color="#bd6f06" /><stop offset=".4" stop-color="#ac6405" /><stop offset="1" stop-color="#824903" />
          </linearGradient>
          <filter id="b5" filterUnits="userSpaceOnUse" x="-200" y="-200" width="2000" height="1500"><feGaussianBlur stdDeviation="6" /></filter>
          <filter id="b12" filterUnits="userSpaceOnUse" x="-200" y="-200" width="2000" height="1500"><feGaussianBlur stdDeviation="12" /></filter>
          <filter id="b24" filterUnits="userSpaceOnUse" x="-200" y="-200" width="2000" height="1500"><feGaussianBlur stdDeviation="24" /></filter>
          <filter id="b60" filterUnits="userSpaceOnUse" x="-200" y="-200" width="2000" height="1500"><feGaussianBlur stdDeviation="60" /></filter>
        </defs>
        <g clip-path="url(#sil)">
          <rect width="1568" height="1140" fill="url(#wall)" />
          <g filter="url(#b5)">
            {#each bands as band}<path d={band.d} fill={band.fill} opacity={band.alpha} />{/each}
          </g>
          <path filter="url(#b60)" fill="#ffc830" opacity=".8" d="M940 640L1160 560L1340 430L1365 560L1340 660L1000 670Z" />
          <ellipse filter="url(#b24)" cx="510" cy="738" rx="80" ry="26" fill="#ffbe2c" opacity=".8" />
          <path filter="url(#b24)" fill="#ffc22c" d="M420 740C620 700 800 655 960 652C1120 646 1250 646 1345 655L1350 690C1250 690 1120 690 1000 694C800 706 640 750 500 780Z" opacity=".85" />
          <path filter="url(#b12)" fill="#ffe24c" opacity=".95" d="M780 698C950 672 1060 662 1150 662C1240 662 1310 668 1350 684C1310 698 1240 692 1170 690C1050 690 950 698 780 698Z" />
          <path filter="url(#b12)" fill="none" stroke="#fa940c" stroke-width="22" opacity=".8" d="M1456 330C1430 420 1424 560 1418 640" />
          <path filter="url(#b5)" fill="none" stroke="#b86c06" stroke-width="10" d="M33 600C28 450 65 380 102 332C160 268 225 206 300 161C410 100 520 61 640 61C700 61 760 66 830 81C960 103 1080 131 1160 156C1250 179 1330 211 1415 256C1450 276 1475 315 1487 350" />
        </g>
        <path fill="url(#bore)" d="M238 470C240 405 270 355 320 310C395 250 490 222 580 222C680 230 745 280 768 335C778 370 778 410 765 450C740 520 680 570 620 605C560 635 500 648 430 645C340 635 280 590 250 532C240 510 236 490 238 470Z" />
        <path fill="#6e3f02" opacity=".85" d="M450 243C500 227 540 222 580 222C680 230 745 280 768 335L770 348C745 302 690 265 630 248C580 238 520 240 450 243Z" />
        <path fill="#e8eaed" d="M250 532C350 440 450 390 560 358C630 340 700 333 768 335C778 370 778 410 765 450C740 520 680 570 620 605C560 635 500 648 430 645C340 635 280 590 250 532Z" />
        <path d="M1438 453L1467 484M1467 453L1438 484" stroke="#b0123f" stroke-width="5" stroke-dasharray="13 5" />
        <path d="M1445 461h15v14h-15z" fill="none" stroke="#b0123f" stroke-width="3" />
      </svg>

      <svg class="cursor" viewBox="0 0 12 20" aria-hidden="true"><path d="M1 1v15l3-3 3 6 2-1-3-6h5z" fill="#fff" stroke="#111" /></svg>
    </div>
  </main>

  <footer>
    <button class="tool pressed" aria-label="Toggle navigator">{@render icon('panel')}</button>
    <button class="tool" aria-label="Toggle browser">{@render icon('globe')}</button>
    <button class="tool" aria-label="Full screen">{@render icon('square')}</button>
    <p><span class="bullet"></span>Feature redefined successfully.</p>
    <div class="find">
      <div class="findbox">
        <button class="binoc" aria-label="Find">{@render icon('binoc')}</button>
        <button class="drop" aria-label="Find options">{@render arrow()}</button>
      </div>
    </div>
    <div class="picker">
      <select aria-label="Selection filter"><option>Geometry</option></select>
      <span class="pick">{@render arrow()}</span>
    </div>
  </footer>
</div>

<style>
  :global(body) { margin: 0; }
  .app {
    display: flex; flex-direction: column; min-height: 100vh; overflow: hidden;
    font: 14px/18px "Open Sans", "Noto Sans", sans-serif; color: #4b4f51; background: #f8f9fb;
  }
  .app * { box-sizing: border-box; }
  button { display: flex; align-items: center; padding: 0; border: 0; background: none; font: inherit; color: inherit; white-space: nowrap; }
  .defs { position: absolute; width: 0; height: 0; }
  .icon { flex: none; display: block; width: 20px; height: 20px; overflow: visible; }
  .arrow { flex: none; width: 0; height: 0; border: 5px solid transparent; border-top-color: #5c6062; border-bottom: 0; }
  .drop { justify-content: center; width: 7px; height: 20px; }
  .tool { justify-content: center; width: 20px; height: 20px; }

  .title { display: grid; grid-template-columns: 1fr auto 1fr; align-items: center; height: 34px; background: #d9e0e1; }
  .title h1 { margin: 0; font-size: 16px; font-weight: 400; line-height: 20px; color: #5a5f61; }
  .quick { display: flex; align-items: center; gap: 10px; padding-left: 11px; }
  .brand { display: flex; align-items: center; gap: 4px; width: 88px; }
  .brand b { font: 400 23px/24px "Lato", sans-serif; }
  .brand sup { font-size: 9px; line-height: 9px; vertical-align: 8px; }
  .dim .arrow { border-top-color: #a3a9aa; }
  .custom { display: flex; align-items: center; height: 30px; padding-left: 2px; border-left: 1px solid #b7bdbe; }
  .custom .icon { width: 18px; height: 18px; }
  .window { display: flex; justify-content: flex-end; gap: 13px; padding-right: 11px; }

  .tabs { display: flex; height: 33px; background: #3e4748; color: #fff; font: 15px/20px "Noto Sans", sans-serif; }
  .tabs > button { justify-content: center; padding: 0 30px; }
  .tabs > .file { width: 73px; background: linear-gradient(135deg, #62cf3f, #4ca631); }
  .tabs > .current { width: 107px; background: #f8f9fb; color: #3f8d2a; }
  .help { display: flex; align-items: center; gap: 14px; margin-left: auto; padding: 0 9px 4px 0; }
  .mini { width: 16px; }
  .mini .icon { width: 16px; height: 16px; }
  .help .arrow { border-top-color: #fff; }
  .question { width: 12px; justify-content: center; font-size: 18px; font-weight: 700; }

  .ribbon {
    display: grid; grid-template-columns: 140fr 183fr 173fr 273fr 185fr 204fr 450fr 175fr 112fr 25fr;
    height: 135px; padding-top: 2px; border-bottom: 2px solid #cbcfd1;
  }
  .group { display: flex; flex-direction: column; margin-bottom: 3px; border-right: 1px solid #b9bcbe; }
  .cols { display: grid; height: 104px; }
  .ops { grid-template-columns: 88px 1fr; padding-left: 2px; }
  .ops .cmd { padding-left: 2px; }
  .data, .body { padding-left: 9px; }
  .datum { grid-template-columns: 58px 1fr 63px; }
  .shapes { grid-template-columns: 68px 1fr; }
  .eng { grid-template-columns: 110px 1fr; padding-left: 8px; }
  .edit { grid-template-columns: 66px 76px 92px 87px 1fr; }
  .surf { grid-template-columns: 81px 1fr; }
  .stack { display: flex; flex-direction: column; }
  .cmd { gap: 5px; height: 33px; }
  .cmd .arrow, .caption .arrow { margin-left: 5px; }
  .off { color: #b0b2b5; }
  .off .arrow { border-top-color: #a4a6a9; }
  .big { flex-direction: column; padding-top: 7px; white-space: normal; text-align: center; }
  .big .icon { width: 38px; height: 38px; }
  .name { margin-top: 13px; }
  .big .arrow { margin-top: 5px; }
  .caption { justify-content: center; height: 26px; }

  main { display: flex; flex: 1; }
  aside { flex: none; width: 355px; border-right: 4px solid #d9e0e2; background: #f8fafb; }
  .navtabs { display: flex; height: 32px; background: #d9e0e2; }
  .navtab { justify-content: center; width: 40px; }
  .navtab.on { background: #f8fafb; }
  .treebar { display: flex; align-items: center; gap: 8px; height: 40px; padding: 0 10px 0 14px; }
  .small { width: 17px; }
  .grip { width: 2px; height: 18px; border-left: 2px dotted #a5a9aa; }
  .list { margin-left: 18px; }
  .pressed { width: 30px; height: 30px; border: 1px solid #b0b3b5; background: #d8dadb; }
  .rule { width: 2px; height: 30px; margin: 0 1px; background: #c5c8c9; }
  .end { margin-left: auto; }
  .filter { display: flex; align-items: center; gap: 5px; height: 33px; padding-left: 15px; }
  .field { display: flex; align-items: center; width: 251px; height: 33px; border: 1px solid #a9aeb0; background: #fff; }
  input { flex: 1; min-width: 0; height: 29px; padding: 0 6px; border: 0; outline: 0; background: none; font: inherit; }
  .clear { width: 10px; margin-right: 7px; }
  .filter .drop { width: 14px; }
  .plus { width: 14px; margin-left: 7px; }
  .plus svg, .clear svg { width: 100%; }
  .tree { margin: 7px 0 0; padding: 0; list-style: none; font-family: "Noto Sans", sans-serif; font-size: 13px; }
  .tree li { display: flex; align-items: center; gap: 7px; height: 22px; padding-left: 20px; white-space: nowrap; }
  .tree li:nth-child(even) { height: 23px; }
  .tree .root { padding-left: 14px; }
  .tree .icon { width: 19px; height: 19px; }
  .twist { width: 12px; }
  .twist i { display: block; width: 0; margin-left: 1px; border: 5px solid transparent; border-left: 9px solid #828587; border-right: 0; }
  .hidden { color: #bdb7a1; }
  .insert { position: relative; height: 2px; margin: 8px 6px 0 14px; background: #6cc850; }
  .insert::before, .insert::after { position: absolute; top: -3px; left: 0; border: 4px solid transparent; border-left-color: #6cc850; border-right: 0; content: ""; }
  .insert::after { right: 0; left: auto; border-right: 4px solid #6cc850; border-left: 0; }

  .canvas { position: relative; display: flex; flex: 1; flex-direction: column; align-items: center; padding-top: 8px; background: #e8eaed; }
  .viewbar { display: flex; align-items: center; justify-content: space-between; width: 528px; height: 40px; padding: 0 9px; border: 1px solid #a9adb0; background: #f8f9fb; }
  .model { position: absolute; top: 258px; left: 505px; width: 580px; height: 380px; }
  .cursor { position: absolute; top: 199px; left: 864px; width: 12px; height: 20px; }

  footer { display: flex; align-items: center; height: 42px; padding: 0 23px 0 8px; gap: 10px; border-top: 2px solid #cbcfd1; background: #f8fafa; }
  footer .pressed { width: 27px; }
  footer p { display: flex; align-items: center; gap: 7px; height: 30px; margin: 0 auto 0 5px; padding-left: 8px; border-left: 2px solid #c5c8c9; }
  .bullet { width: 6px; height: 6px; border-radius: 3px; background: #1d6684; }
  .find { display: flex; height: 32px; margin-right: 102px; padding-right: 3px; border: solid #b4b8b9; border-width: 0 1px; }
  .find::before { width: 6px; margin-right: 2px; border-right: 1px solid #b4b8b9; content: ""; }
  .findbox { display: flex; align-self: center; height: 30px; border: 1px solid #c0c3c4; }
  .binoc { justify-content: center; width: 33px; height: 28px; border-right: 1px solid #c0c3c4; }
  .findbox .drop { width: 18px; height: 28px; }
  .picker { display: flex; width: 206px; height: 28px; border: 1px solid #a9adb0; }
  select { flex: 1; padding: 0 9px; border: 0; appearance: none; background: none; font: inherit; color: inherit; }
  .pick { display: flex; align-items: center; justify-content: center; width: 19px; border-left: 1px solid #a9adb0; pointer-events: none; }
</style>
